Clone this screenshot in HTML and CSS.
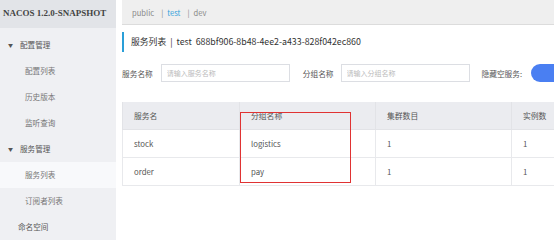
FILE: index.html
```html
<!DOCTYPE html>
<html lang="zh-CN">
<head>
  <meta charset="UTF-8" />
  <title>Nacos - 服务列表</title>
  <link rel="stylesheet" href="styles.css">
</head>
<body>
  <div class="sidebar">
    <div class="brand">NACOS 1.2.0-SNAPSHOT</div>
    <div class="menu">
      <div class="group"><span class="caret">&#9660;</span>配置管理</div>
      <div class="item">配置列表</div>
      <div class="item">历史版本</div>
      <div class="item">监听查询</div>
      <div class="group"><span class="caret">&#9660;</span>服务管理</div>
      <div class="item active">服务列表</div>
      <div class="item">订阅者列表</div>
      <div class="group top">命名空间</div>
    </div>
  </div>
  <div class="main">
    <div class="ns-bar">
      <span class="ns">public</span>
      <span class="sep">|</span><span class="ns current">test</span>
      <span class="sep">|</span><span class="ns">dev</span>
    </div>
    <div class="title">服务列表 &nbsp;|&nbsp; test &nbsp;688bf906-8b48-4ee2-a433-828f042ec860</div>
    <div class="search">
      <label>服务名称</label>
      <input class="field" type="text" placeholder="请输入服务名称" />
      <label class="gap">分组名称</label>
      <input class="field" type="text" placeholder="请输入分组名称" />
      <label class="gap">隐藏空服务:</label>
      <span class="switch"></span>
    </div>
    <div class="table-wrap">
      <table class="services">
        <thead>
          <tr><th class="c1">服务名</th><th class="c2">分组名称</th><th class="c3">集群数目</th><th>实例数</th></tr>
        </thead>
        <tbody>
          <tr><td>stock</td><td>logistics</td><td>1</td><td>1</td></tr>
          <tr><td>order</td><td>pay</td><td>1</td><td>1</td></tr>
        </tbody>
      </table>
      <div class="mark"></div>
    </div>
  </div>
</body>
</html>
```

FILE: styles.css
```css
body {
  margin: 0;
  display: flex;
  height: 240px;
  overflow: hidden;
  font-family: "Noto Sans CJK SC", "Liberation Sans", sans-serif;
  background: #fff;
  color: #333;
}
.sidebar {
  width: 116px;
  flex: none;
  background: #eff0f3;
}
.brand {
  height: 28px;
  line-height: 26px;
  background: #e2e4e8;
  font-family: "Liberation Serif", serif;
  font-weight: bold;
  font-size: 9px;
  color: #444;
  padding-left: 3px;
  white-space: nowrap;
}
.menu {
  padding-top: 4px;
}
.group, .item {
  height: 26px;
  line-height: 26px;
  font-size: 7.6px;
  color: #555;
  white-space: nowrap;
}
.group {
  padding-left: 8px;
}
.group.top {
  padding-left: 18px;
}
.caret {
  font-size: 5px;
  margin-right: 7px;
  vertical-align: 1px;
}
.item {
  padding-left: 25px;
  color: #777;
}
.item.active {
  background: #f8f9fb;
}
.main {
  flex: 1;
  padding-left: 6px;
  overflow: hidden;
}
.ns-bar {
  height: 25px;
  box-sizing: border-box;
  background: #efefef;
  border-bottom: 1px solid #dcdcdc;
  display: flex;
  align-items: center;
  padding-left: 10px;
  font-size: 7.6px;
  color: #888;
}
.ns {
  margin-right: 7px;
}
.ns.current {
  color: #33a3dc;
}
.sep {
  margin-right: 4px;
}
.title {
  margin-top: 7px;
  height: 20px;
  line-height: 20px;
  border-left: 2px solid #2a9fd8;
  padding-left: 7px;
  font-size: 8.8px;
  color: #333;
  white-space: nowrap;
}
.search {
  display: flex;
  align-items: center;
  margin-top: 12px;
  height: 18px;
  white-space: nowrap;
}
.search label {
  flex: none;
  font-size: 7.7px;
  color: #555;
  margin-right: 8px;
}
.search label.gap {
  margin-left: 13px;
  margin-right: 7px;
}
.search label.gap:last-of-type {
  margin-left: 12px;
  margin-right: 9px;
}
.field {
  flex: none;
  width: 129px;
  height: 18px;
  box-sizing: border-box;
  border: 1px solid #dcdee3;
  padding: 0 5px;
  font-family: inherit;
  font-size: 7px;
  outline: none;
}
.field::placeholder {
  color: #bbb;
}
.switch {
  flex: none;
  width: 44px;
  height: 18px;
  border-radius: 9px;
  background: #4a7ff2;
}
.table-wrap {
  position: relative;
  margin-top: 20px;
}
.services {
  width: 560px;
  border-collapse: collapse;
  table-layout: fixed;
  font-size: 7.8px;
}
.services th, .services td {
  height: 27px;
  padding: 0 0 0 11px;
  text-align: left;
  font-weight: normal;
  color: #555;
  border: 1px solid #e8e9ec;
  border-width: 0 0 1px 1px;
}
.services th {
  background: #ebecf0;
  border-color: #e2e3e7;
}
.services .c1 {
  width: 105px;
}
.services .c2 {
  width: 124px;
}
.services .c3 {
  width: 124px;
}
.mark {
  position: absolute;
  left: 118px;
  top: 10px;
  width: 111px;
  height: 71px;
  box-sizing: border-box;
  border: 1px solid #e03333;
}
```
